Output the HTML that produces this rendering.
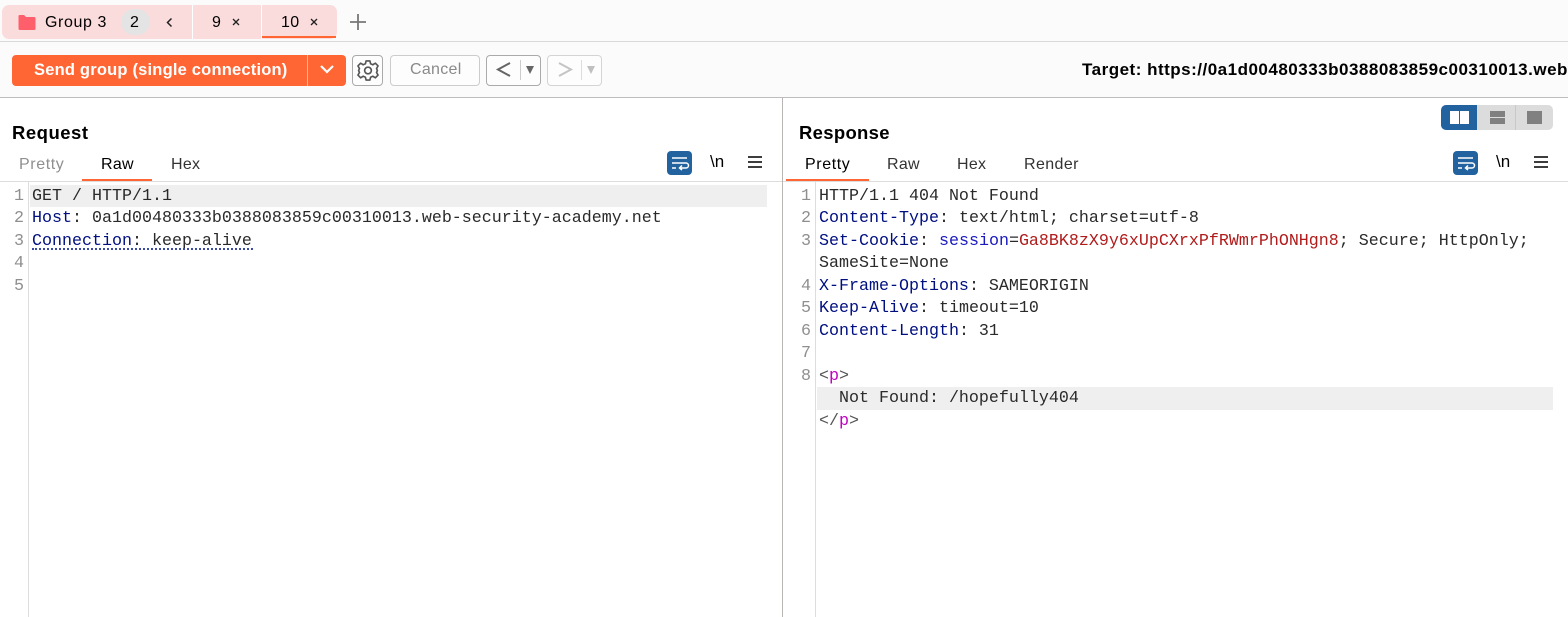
<!DOCTYPE html>
<html><head><meta charset="utf-8">
<style>
html,body{margin:0;padding:0;width:1568px;height:617px;overflow:hidden;background:#fff;color:#000;font-family:"Liberation Sans","Noto Sans CJK SC",sans-serif}
.a{position:absolute;white-space:nowrap}
.ui{font-size:16px;line-height:20px;letter-spacing:.3px}
.code{font-family:"Liberation Mono",monospace;font-size:16.67px;color:#2a2a2a;white-space:pre}
.ln{font-family:"Liberation Mono",monospace;font-size:16.67px;color:#8f8f8f;white-space:pre}
.k{color:#000f80}.b{color:#1a1ac0}.r{color:#b01b1b}.m{color:#c000c0}.g{color:#555}
</style></head><body>
<div class="a" style="left:0;top:0;width:1568px;height:41px;background:#fbfbfb;border-bottom:1px solid #d9d9d9"></div>
<div class="a" style="left:0;top:42px;width:1568px;height:55px;background:#fbfbfb;border-bottom:1px solid #bdbdbd"></div>

<!-- tabs -->
<div class="a" style="left:2px;top:5px;width:335px;height:34px;background:#fbdcdc;border-radius:7px"></div>
<div class="a" style="left:192px;top:5px;width:1px;height:34px;background:#fff"></div>
<div class="a" style="left:261px;top:5px;width:1px;height:34px;background:#fff"></div>
<div class="a" style="left:262px;top:36px;width:74px;height:2px;background:#ff6633"></div>
<svg class="a" style="left:18px;top:15px" width="18" height="15" viewBox="0 0 18 15"><path d="M1 0h5l2 2h8q1.500 0 1.500 1.500v10q0 1.500-1.500 1.500h-14q-1.500 0-1.500-1.500v-12.500q0-1 1-1z" fill="#ff5f6b"/></svg>
<div class="a ui" style="left:45px;top:13px;letter-spacing:.6px">Group 3</div>
<div class="a" style="left:121px;top:9px;width:29px;height:26px;border-radius:13px;background:#e4e4e4"></div>
<div class="a ui" style="left:130px;top:13px">2</div>
<svg class="a" style="left:165px;top:17px" width="10" height="11" viewBox="0 0 10 11"><path d="M6.500 1.500L2.500 5.500L6.500 9.500" fill="none" stroke="#222" stroke-width="1.500"/></svg>
<div class="a ui" style="left:212px;top:13px">9</div>
<svg class="a" style="left:232px;top:18px" width="8" height="8" viewBox="0 0 8 8"><path d="M1 1L7 7M7 1L1 7" stroke="#222" stroke-width="1.300"/></svg>
<div class="a ui" style="left:281px;top:13px">10</div>
<svg class="a" style="left:310px;top:18px" width="8" height="8" viewBox="0 0 8 8"><path d="M1 1L7 7M7 1L1 7" stroke="#222" stroke-width="1.300"/></svg>
<svg class="a" style="left:349px;top:13px" width="18" height="18" viewBox="0 0 18 18"><path d="M9 1V17M1 9H17" stroke="#777" stroke-width="1.800"/></svg>

<!-- toolbar -->
<div class="a" style="left:12px;top:55px;width:334px;height:31px;background:#ff6633;border-radius:4px"></div>
<div class="a" style="left:307px;top:55px;width:1px;height:31px;background:#ffb399"></div>
<div class="a" style="left:34px;top:60px;font-size:16.5px;line-height:20px;font-weight:bold;color:#fff;letter-spacing:.2px">Send group (single connection)</div>
<svg class="a" style="left:319px;top:64px" width="16" height="11" viewBox="0 0 16 11"><path d="M2 2L8 8L14 2" fill="none" stroke="#fff" stroke-width="2.200"/></svg>
<div class="a" style="left:352px;top:55px;width:29px;height:29px;border:1px solid #aaa;border-radius:4px;background:#fdfdfd"></div>
<svg class="a" style="left:356px;top:59px" width="24" height="23" viewBox="0 0 24 24" fill="none" stroke="#555" stroke-width="1.700"><circle cx="12" cy="12" r="3.500"/><path d="M10 2h4l.7 3 2.300 1 2.700-1.600 2.800 2.800L20.900 10l.9 2-.9 2 1.600 2.800-2.800 2.800L17 18l-2.300 1-.7 3h-4l-.7-3L7 18l-2.700 1.600-2.800-2.800L3.100 14l-.9-2 .9-2-1.600-2.800 2.800-2.800L7 6l2.300-1z" stroke-linejoin="round"/></svg>
<div class="a" style="left:390px;top:55px;width:88px;height:29px;border:1px solid #ccc;border-radius:4px;background:#fdfdfd"></div>
<div class="a ui" style="left:410px;top:60px;color:#8a8a8a">Cancel</div>
<div class="a" style="left:486px;top:55px;width:53px;height:29px;border:1px solid #aaa;border-radius:4px;background:#fdfdfd"></div>
<svg class="a" style="left:495px;top:60px" width="18" height="19" viewBox="0 0 18 19"><path d="M15 3L3 9.500L15 16" fill="none" stroke="#666" stroke-width="2"/></svg>
<div class="a" style="left:520px;top:60px;width:1px;height:20px;background:#ccc"></div>
<svg class="a" style="left:525px;top:65px" width="10" height="10" viewBox="0 0 10 10"><path d="M1 1H9L5 9z" fill="#666"/></svg>
<div class="a" style="left:547px;top:55px;width:53px;height:29px;border:1px solid #d4d4d4;border-radius:4px;background:#fdfdfd"></div>
<svg class="a" style="left:556px;top:60px" width="18" height="19" viewBox="0 0 18 19"><path d="M3 3L15 9.500L3 16" fill="none" stroke="#c4c4c4" stroke-width="2"/></svg>
<div class="a" style="left:581px;top:60px;width:1px;height:20px;background:#ddd"></div>
<svg class="a" style="left:586px;top:65px" width="10" height="10" viewBox="0 0 10 10"><path d="M1 1H9L5 9z" fill="#c0c0c0"/></svg>
<div class="a" style="left:1082px;top:60px;font-size:17px;line-height:20px;font-weight:bold;letter-spacing:.5px;width:486px;overflow:hidden">Target: https://0a1d00480333b0388083859c00310013.web</div>

<!-- panel divider -->
<div class="a" style="left:782px;top:98px;width:1px;height:519px;background:#b9b5b5"></div>

<!-- left panel -->
<div class="a" style="left:12px;top:122px;font-size:18.500px;line-height:22px;font-weight:bold;letter-spacing:.5px">Request</div>
<div class="a ui" style="left:19px;top:155px;color:#8f8f8f;letter-spacing:.6px">Pretty</div>
<div class="a ui" style="left:101px;top:155px">Raw</div>
<div class="a ui" style="left:171px;top:155px;color:#333">Hex</div>
<div class="a" style="left:82px;top:179px;width:70px;height:2px;background:#ff6633"></div>
<div class="a" style="left:0;top:181px;width:782px;height:1px;background:#ddd"></div>
<div class="a" style="left:28px;top:182px;width:1px;height:435px;background:#ddd"></div>
<div class="a" style="left:30px;top:185px;width:737px;height:22px;background:#efefef"></div>

<svg class="a" style="left:667px;top:151px" width="25" height="24" viewBox="0 0 25 24"><rect width="25" height="24" rx="4" fill="#22629e"/><path d="M5 7H20M5 12H19a2.500 2.500 0 0 1 0 5H13M15 14.500L12.500 17L15 19M5 17H9" fill="none" stroke="#fff" stroke-width="1.500"/></svg>
<div class="a" style="left:710px;top:153px;font-size:17px;line-height:18px">\n</div>
<svg class="a" style="left:748px;top:155px" width="14" height="14" viewBox="0 0 14 14"><path d="M0 2H14M0 7H14M0 12H14" stroke="#222" stroke-width="1.800"/></svg>

<div class="a ln" style="left:14px;top:185.500px;line-height:22.500px">1
2
3
4
5</div>
<div class="a code" style="left:32px;top:185.500px;line-height:22.500px">GET / HTTP/1.1
<span class="k">Host</span>: 0a1d00480333b0388083859c00310013.web-security-academy.net
<span class="k">Connection</span>: keep-alive</div>
<div class="a" style="left:32px;top:248px;width:221px;height:0;border-top:2px dotted #3a4aa8"></div>

<!-- right panel -->
<div class="a" style="left:799px;top:122px;font-size:18.500px;line-height:22px;font-weight:bold;letter-spacing:.3px">Response</div>
<div class="a ui" style="left:805px;top:155px;letter-spacing:.6px">Pretty</div>
<div class="a ui" style="left:887px;top:155px;color:#333">Raw</div>
<div class="a ui" style="left:957px;top:155px;color:#333">Hex</div>
<div class="a ui" style="left:1024px;top:155px;color:#333;letter-spacing:.4px">Render</div>
<div class="a" style="left:786px;top:179px;width:83px;height:2px;background:#ff6633"></div>
<div class="a" style="left:783px;top:181px;width:785px;height:1px;background:#ddd"></div>
<div class="a" style="left:815px;top:182px;width:1px;height:435px;background:#ddd"></div>
<div class="a" style="left:817px;top:387px;width:736px;height:23px;background:#efefef"></div>

<!-- layout toggle -->
<div class="a" style="left:1441px;top:105px;width:112px;height:25px;background:#dcdcdc;border-radius:5px"></div>
<div class="a" style="left:1441px;top:105px;width:36px;height:25px;background:#22629e;border-radius:5px 0 0 5px"></div>
<div class="a" style="left:1450px;top:111px;width:9px;height:13px;background:#fff"></div>
<div class="a" style="left:1460px;top:111px;width:9px;height:13px;background:#fff"></div>
<div class="a" style="left:1515px;top:105px;width:1px;height:25px;background:#c8c8c8"></div>
<div class="a" style="left:1490px;top:111px;width:15px;height:6px;background:#808080"></div>
<div class="a" style="left:1490px;top:118px;width:15px;height:6px;background:#808080"></div>
<div class="a" style="left:1527px;top:111px;width:15px;height:13px;background:#808080"></div>

<svg class="a" style="left:1453px;top:151px" width="25" height="24" viewBox="0 0 25 24"><rect width="25" height="24" rx="4" fill="#22629e"/><path d="M5 7H20M5 12H19a2.500 2.500 0 0 1 0 5H13M15 14.500L12.500 17L15 19M5 17H9" fill="none" stroke="#fff" stroke-width="1.500"/></svg>
<div class="a" style="left:1496px;top:153px;font-size:17px;line-height:18px">\n</div>
<svg class="a" style="left:1534px;top:155px" width="14" height="14" viewBox="0 0 14 14"><path d="M0 2H14M0 7H14M0 12H14" stroke="#222" stroke-width="1.800"/></svg>

<div class="a ln" style="left:801px;top:185.500px;line-height:22.500px">1
2
3

4
5
6
7
8</div>
<div class="a code" style="left:819px;top:185.500px;line-height:22.500px">HTTP/1.1 404 Not Found
<span class="k">Content-Type</span>: text/html; charset=utf-8
<span class="k">Set-Cookie</span>: <span class="b">session</span>=<span class="r">Ga8BK8zX9y6xUpCXrxPfRWmrPhONHgn8</span>; Secure; HttpOnly;
SameSite=None
<span class="k">X-Frame-Options</span>: SAMEORIGIN
<span class="k">Keep-Alive</span>: timeout=10
<span class="k">Content-Length</span>: 31

<span class="g">&lt;</span><span class="m">p</span><span class="g">&gt;</span>
  Not Found: /hopefully404
<span class="g">&lt;/</span><span class="m">p</span><span class="g">&gt;</span></div>
</body></html>
